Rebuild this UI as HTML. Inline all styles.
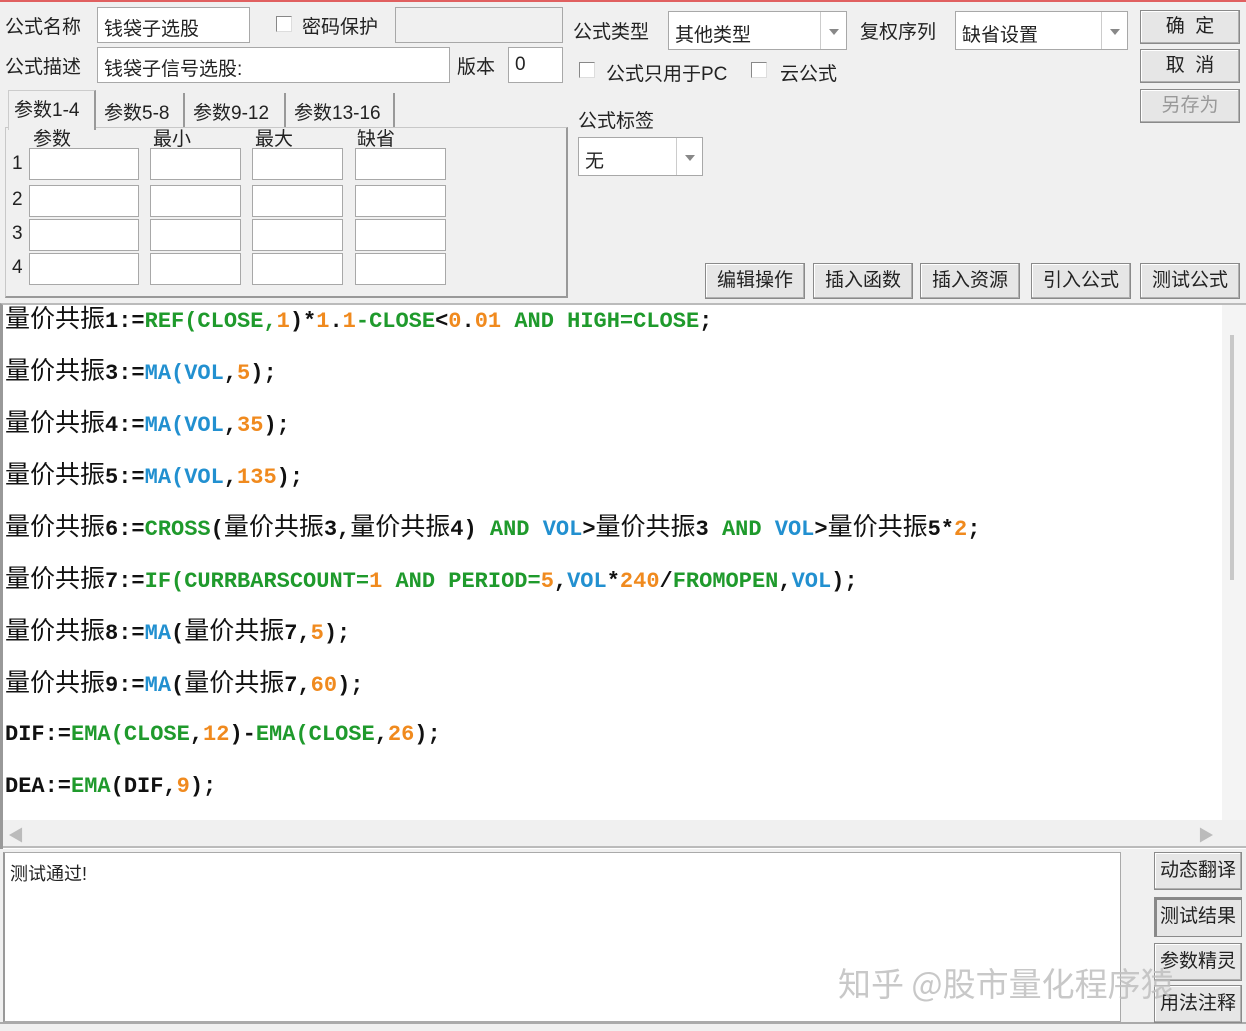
<!DOCTYPE html>
<html><head><meta charset="utf-8"><style>
*{box-sizing:border-box;margin:0;padding:0}
body{width:1246px;height:1031px;background:#f0f0f0;position:relative;overflow:hidden;font-family:"Liberation Sans","Noto Sans CJK SC",sans-serif;font-size:19px;color:#222}
.a{position:absolute;white-space:nowrap}
.in{position:absolute;background:#fff;border:1px solid #a8a8a8}
.btn{position:absolute;background:#e6e6e6;border:1px solid #8a8a8a;box-shadow:inset -1px -1px 0 #b0b0b0,inset 1px 1px 0 #fff;text-align:center;font-size:19px;color:#222}
.cb{position:absolute;width:16px;height:16px;background:#fff;border:1px solid #888;border-right-color:#ddd;border-bottom-color:#ddd}
.dd{position:absolute;top:0;right:0;width:26px;height:100%;border-left:1px solid #ccc}
.dd:after{content:"";position:absolute;left:8px;top:50%;margin-top:-2px;border:5px solid transparent;border-top:6px solid #888}
.code{position:absolute;left:5px;font-family:"Liberation Mono",monospace;font-weight:bold;font-size:22px;color:#111;white-space:pre}
.code .c{font-family:"Noto Sans CJK SC",sans-serif;font-weight:normal;font-size:25px}
.g{color:#1f9a2c}.b{color:#2290d0}.o{color:#f08a1e}
</style></head><body>
<div class="a" style="left:0;top:0;width:1246px;height:2px;background:#e06060"></div>
<div class="a" style="left:5px;top:12px">公式名称</div>
<div class="in" style="left:97px;top:7px;width:153px;height:36px"><span class="a" style="left:6px;top:6px">钱袋子选股</span></div>
<div class="cb" style="left:276px;top:16px"></div>
<div class="a" style="left:302px;top:12px">密码保护</div>
<div class="in" style="left:395px;top:7px;width:168px;height:36px;background:#f0f0f0"></div>
<div class="a" style="left:5px;top:52px">公式描述</div>
<div class="in" style="left:97px;top:47px;width:353px;height:36px"><span class="a" style="left:6px;top:6px">钱袋子信号选股:</span></div>
<div class="a" style="left:457px;top:52px">版本</div>
<div class="in" style="left:508px;top:47px;width:55px;height:36px"><span class="a" style="left:6px;top:6px">0</span></div>

<div class="a" style="left:573px;top:17px">公式类型</div>
<div class="in" style="left:668px;top:11px;width:179px;height:39px"><span class="a" style="left:6px;top:8px">其他类型</span><div class="dd"></div></div>
<div class="a" style="left:860px;top:17px">复权序列</div>
<div class="in" style="left:955px;top:11px;width:173px;height:39px"><span class="a" style="left:6px;top:8px">缺省设置</span><div class="dd"></div></div>
<div class="cb" style="left:579px;top:62px"></div><div class="a" style="left:606px;top:59px">公式只用于PC</div>
<div class="cb" style="left:751px;top:62px"></div><div class="a" style="left:780px;top:59px">云公式</div>
<div class="a" style="left:578px;top:106px">公式标签</div>
<div class="in" style="left:578px;top:137px;width:125px;height:39px"><span class="a" style="left:6px;top:8px">无</span><div class="dd"></div></div>
<div class="btn" style="left:1140px;top:10px;width:100px;height:34px;line-height:32px">确&nbsp;&nbsp;定</div>
<div class="btn" style="left:1140px;top:49px;width:100px;height:34px;line-height:32px">取&nbsp;&nbsp;消</div>
<div class="btn" style="left:1140px;top:89px;width:100px;height:34px;line-height:32px;color:#999">另存为</div>

<div class="a" style="left:5px;top:127px;width:563px;height:171px;border:1px solid #c8c8c8;border-right:2px solid #999;border-bottom:2px solid #999"></div>
<div class="a" style="left:8px;top:90px;width:88px;height:40px;background:#f0f0f0;border:1px solid #ccc;border-bottom:none;border-right:2px solid #999"></div>
<div class="a" style="left:14px;top:95px">参数1-4</div>
<div class="a" style="left:104px;top:98px">参数5-8</div>
<div class="a" style="left:183px;top:93px;width:2px;height:34px;background:#999"></div>
<div class="a" style="left:193px;top:98px">参数9-12</div>
<div class="a" style="left:284px;top:93px;width:2px;height:34px;background:#999"></div>
<div class="a" style="left:294px;top:98px">参数13-16</div>
<div class="a" style="left:393px;top:93px;width:2px;height:34px;background:#999"></div>
<div class="a" style="left:33px;top:124px">参数</div>
<div class="a" style="left:153px;top:124px">最小</div>
<div class="a" style="left:255px;top:124px">最大</div>
<div class="a" style="left:357px;top:124px">缺省</div>
<div class="a" style="left:12px;top:153px">1</div><div class="a" style="left:12px;top:189px">2</div><div class="a" style="left:12px;top:223px">3</div><div class="a" style="left:12px;top:257px">4</div>
<div class="in" style="left:29px;top:148px;width:110px;height:32px"></div><div class="in" style="left:150px;top:148px;width:91px;height:32px"></div><div class="in" style="left:252px;top:148px;width:91px;height:32px"></div><div class="in" style="left:355px;top:148px;width:91px;height:32px"></div>
<div class="in" style="left:29px;top:185px;width:110px;height:32px"></div><div class="in" style="left:150px;top:185px;width:91px;height:32px"></div><div class="in" style="left:252px;top:185px;width:91px;height:32px"></div><div class="in" style="left:355px;top:185px;width:91px;height:32px"></div>
<div class="in" style="left:29px;top:219px;width:110px;height:32px"></div><div class="in" style="left:150px;top:219px;width:91px;height:32px"></div><div class="in" style="left:252px;top:219px;width:91px;height:32px"></div><div class="in" style="left:355px;top:219px;width:91px;height:32px"></div>
<div class="in" style="left:29px;top:253px;width:110px;height:32px"></div><div class="in" style="left:150px;top:253px;width:91px;height:32px"></div><div class="in" style="left:252px;top:253px;width:91px;height:32px"></div><div class="in" style="left:355px;top:253px;width:91px;height:32px"></div>

<div class="btn" style="left:705px;top:263px;width:100px;height:36px;line-height:34px">编辑操作</div>
<div class="btn" style="left:813px;top:263px;width:100px;height:36px;line-height:34px">插入函数</div>
<div class="btn" style="left:920px;top:263px;width:100px;height:36px;line-height:34px">插入资源</div>
<div class="btn" style="left:1031px;top:263px;width:100px;height:36px;line-height:34px">引入公式</div>
<div class="btn" style="left:1140px;top:263px;width:100px;height:36px;line-height:34px">测试公式</div>

<div class="a" style="left:0;top:303px;width:1246px;height:546px;border-top:2px solid #bbb;border-left:3px solid #999;background:#fff"></div>
<div class="a" style="left:1222px;top:305px;width:24px;height:515px;background:#f4f4f4"></div>
<div class="a" style="left:1230px;top:335px;width:4px;height:245px;background:#c8c8c8"></div>
<div class="a" style="left:3px;top:820px;width:1243px;height:28px;background:#f0f0f0;border-bottom:2px solid #bbb"></div>
<div class="a" style="left:8px;top:822px;color:#bbb;font-size:16px">◀</div>
<div class="a" style="left:1198px;top:822px;color:#bbb;font-size:16px">▶</div>

<div class="code" style="top:299px"><span class="c">量价共振</span>1:=<span class="g">REF(CLOSE,</span><span class="o">1</span>)*<span class="o">1</span>.<span class="o">1</span><span class="g">-CLOSE</span>&lt;<span class="o">0</span>.<span class="o">01</span> <span class="g">AND HIGH=CLOSE</span>;</div>
<div class="code" style="top:351px"><span class="c">量价共振</span>3:=<span class="b">MA(VOL</span>,<span class="o">5</span>);</div>
<div class="code" style="top:403px"><span class="c">量价共振</span>4:=<span class="b">MA(VOL</span>,<span class="o">35</span>);</div>
<div class="code" style="top:455px"><span class="c">量价共振</span>5:=<span class="b">MA(VOL</span>,<span class="o">135</span>);</div>
<div class="code" style="top:507px"><span class="c">量价共振</span>6:=<span class="g">CROSS</span>(<span class="c">量价共振</span>3,<span class="c">量价共振</span>4) <span class="g">AND</span> <span class="b">VOL</span>&gt;<span class="c">量价共振</span>3 <span class="g">AND</span> <span class="b">VOL</span>&gt;<span class="c">量价共振</span>5*<span class="o">2</span>;</div>
<div class="code" style="top:559px"><span class="c">量价共振</span>7:=<span class="g">IF(CURRBARSCOUNT=</span><span class="o">1</span> <span class="g">AND PERIOD=</span><span class="o">5</span>,<span class="b">VOL</span>*<span class="o">240</span>/<span class="g">FROMOPEN</span>,<span class="b">VOL</span>);</div>
<div class="code" style="top:611px"><span class="c">量价共振</span>8:=<span class="b">MA</span>(<span class="c">量价共振</span>7,<span class="o">5</span>);</div>
<div class="code" style="top:663px"><span class="c">量价共振</span>9:=<span class="b">MA</span>(<span class="c">量价共振</span>7,<span class="o">60</span>);</div>
<div class="code" style="top:722px">DIF:=<span class="g">EMA(CLOSE</span>,<span class="o">12</span>)-<span class="g">EMA(CLOSE</span>,<span class="o">26</span>);</div>
<div class="code" style="top:774px">DEA:=<span class="g">EMA</span>(DIF,<span class="o">9</span>);</div>

<div class="a" style="left:3px;top:852px;width:1118px;height:170px;background:#fff;border:1px solid #aaa;border-left:2px solid #999"></div>
<div class="a" style="left:10px;top:860px;font-size:18px">测试通过!</div>
<div class="a" style="left:0;top:1022px;width:1246px;height:2px;background:#aaa"></div>
<div class="btn" style="left:1154px;top:852px;width:88px;height:38px;line-height:36px">动态翻译</div>
<div class="btn" style="left:1154px;top:897px;width:88px;height:40px;line-height:38px;box-shadow:inset 2px 2px 0 #888">测试结果</div>
<div class="btn" style="left:1154px;top:943px;width:88px;height:38px;line-height:36px">参数精灵</div>
<div class="btn" style="left:1154px;top:985px;width:88px;height:38px;line-height:36px">用法注释</div>
<div class="a" style="left:838px;top:958px;font-size:33px;color:rgba(190,190,190,0.85);font-family:'Noto Sans CJK SC',sans-serif">知乎 @股市量化程序猿</div>
</body></html>
